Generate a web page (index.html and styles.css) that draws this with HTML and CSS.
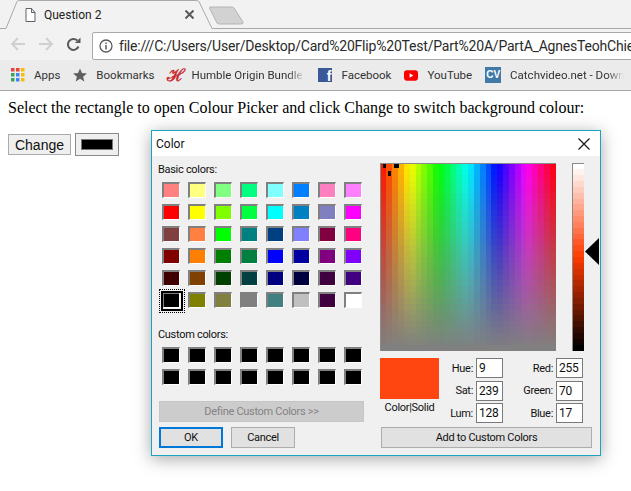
FILE: index.html

```html
<!DOCTYPE html>
<html lang="en">
<head>
    <meta charset="UTF-8">
    <title>Question 2</title>
    <link rel="stylesheet" href="styles.css">
</head>
<body>
    <header class="browser">
        <div class="tabstrip">
            <svg class="tabshape" width="631" height="29" viewBox="0 0 631 29">
                <path d="M0 28.5H6L17 1.5Q18 .5 20 .5H196Q198 .5 199 1.5L212 28.5H631" fill="#f2f2f2" stroke="#a9a9a9"/>
                <path d="M209.5 8Q209 7 211 7H231Q233 7 234 8L243 22Q243.500 24 241 24H220Q218 24 217 23Z" fill="#d2d2d2" stroke="#b4b4b4"/>
            </svg>
            <svg class="tabicon" width="11" height="14" viewBox="0 0 11 14">
                <path d="M1 .5H6.500L10 4.500V13.500H1ZM6.500 .5V4.500H10" fill="#fff" stroke="#5f6368"/>
            </svg>
            <span class="tabtitle">Question 2</span>
            <svg class="tabclose" width="9" height="9" viewBox="0 0 9 9">
                <path d="M.5 .5L8.500 8.500M8.500 .5L.5 8.500" stroke="#5a5a5a" stroke-width="2"/>
            </svg>
        </div>
        <div class="toolbar">
            <svg class="navicon" width="16" height="14" viewBox="0 0 16 14">
                <path d="M15 7H2M8 1L2 7L8 13" fill="none" stroke="#d0d0d0" stroke-width="2"/>
            </svg>
            <svg class="navicon" width="16" height="14" viewBox="0 0 16 14">
                <path d="M1 7H14M8 1L14 7L8 13" fill="none" stroke="#d0d0d0" stroke-width="2"/>
            </svg>
            <svg class="navicon" width="15" height="15" viewBox="0 0 15 15">
                <path d="M12.500 9.500A5.500 5.500 0 1 1 11.300 3.500" fill="none" stroke="#5a5a5a" stroke-width="2"/>
                <path d="M9 6H14.500V.5Z" fill="#5a5a5a"/>
            </svg>
            <div class="omnibox">
                <svg class="infoicon" width="14" height="14" viewBox="0 0 14 14">
                    <circle cx="7" cy="7" r="6" fill="none" stroke="#5a5a5a" stroke-width="1.300"/>
                    <path d="M7 6V10.500M7 3.500V5" stroke="#5a5a5a" stroke-width="1.500"/>
                </svg>
                <span class="url">file:///C:/Users/User/Desktop/Card%20Flip%20Test/Part%20A/PartA_AgnesTeohChiehYi/index.html</span>
            </div>
        </div>
        <nav class="bookmarks">
            <a class="mark">
                <svg width="14" height="14" viewBox="0 0 14 14">
                    <path d="M0 0h3.500v3.500H0z" fill="#ea4335"/><path d="M5 0h3.500v3.500H5z" fill="#ea4335"/><path d="M10 0h3.500v3.500H10z" fill="#fbbc05"/>
                    <path d="M0 5h3.500v3.500H0z" fill="#34a853"/><path d="M5 5h3.500v3.500H5z" fill="#4285f4"/><path d="M10 5h3.500v3.500H10z" fill="#fbbc05"/>
                    <path d="M0 10h3.500v3.500H0z" fill="#34a853"/><path d="M5 10h3.500v3.500H5z" fill="#4285f4"/><path d="M10 10h3.500v3.500H10z" fill="#fbbc05"/>
                </svg>
                <span>Apps</span>
            </a>
            <a class="mark">
                <svg width="14" height="14" viewBox="0 0 16 15">
                    <path d="M8 0L10.200 5.300L16 5.700L11.500 9.400L13 15L8 11.900L3 15L4.500 9.400L0 5.700L5.800 5.300Z" fill="#5f5f5f"/>
                </svg>
                <span>Bookmarks</span>
            </a>
            <a class="mark">
                <span class="humble">ℋ</span>
                <span class="fade humble-name">Humble Origin Bundle</span>
            </a>
            <a class="mark">
                <span class="fbicon">f</span>
                <span>Facebook</span>
            </a>
            <a class="mark">
                <svg width="14" height="11" viewBox="0 0 15 11">
                    <rect width="15" height="11" rx="3" fill="#f00"/>
                    <path d="M6 3L10 5.500L6 8Z" fill="#fff"/>
                </svg>
                <span>YouTube</span>
            </a>
            <a class="mark">
                <span class="cvicon">CV</span>
                <span class="fade catch-name">Catchvideo.net - Download</span>
            </a>
        </nav>
    </header>

    <main class="page">
        <p class="intro">Select the rectangle to open Colour Picker and click Change to switch background colour:</p>
        <div class="controls">
            <button class="change">Change</button>
            <span class="colorinput"><span class="colorfill"></span></span>
        </div>
    </main>

    <section class="dialog">
        <div class="titlebar">
            <span>Color</span>
            <svg width="12" height="12" viewBox="0 0 12 12">
                <path d="M.5 .5L11.500 11.500M11.500 .5L.5 11.500" stroke="#111" stroke-width="1.100"/>
            </svg>
        </div>
        <div class="dialogbody">
            <div class="leftcol">
                <div class="grouplabel">Basic colors:</div>
                <div class="swatches" id="basic"></div>
                <div class="grouplabel customlabel">Custom colors:</div>
                <div class="swatches" id="custom"></div>
                <button class="winbtn define" disabled>Define Custom Colors &gt;&gt;</button>
                <div class="okrow">
                    <button class="winbtn ok">OK</button>
                    <button class="winbtn cancel">Cancel</button>
                </div>
            </div>
            <div class="rightcol">
                <div class="pickers">
                    <canvas class="spectrum" id="spectrum" width="175" height="187"></canvas>
                    <canvas class="lumbar" id="lumbar" width="11" height="187"></canvas>
                    <svg class="arrow" width="14" height="27" viewBox="0 0 14 27">
                        <path d="M14 0V27L0 13.500Z" fill="#000"/>
                    </svg>
                </div>
                <div class="values">
                    <div class="preview">
                        <div class="previewfill"></div>
                        <div class="previewlabel">Color|Solid</div>
                    </div>
                    <div class="fields">
                        <label class="fieldlabel">Hue:</label><span class="field">9</span>
                        <label class="fieldlabel">Red:</label><span class="field">255</span>
                        <label class="fieldlabel">Sat:</label><span class="field">239</span>
                        <label class="fieldlabel">Green:</label><span class="field">70</span>
                        <label class="fieldlabel">Lum:</label><span class="field">128</span>
                        <label class="fieldlabel">Blue:</label><span class="field">17</span>
                    </div>
                </div>
                <button class="winbtn addcustom">Add to Custom Colors</button>
            </div>
        </div>
    </section>

    <script src="script.js"></script>
</body>
</html>
```

FILE: styles.css

```css
html, body {
    height: 100%;
}

body {
    margin: 0;
    background-color: #FFFFFF;
    overflow: hidden;
}

/* browser window */
.browser {
    background-color: #F2F2F2;
    font-family: Roboto, sans-serif;
    font-size: 11.500px;
    color: #333333;
    border-bottom: 1px solid #A6A6A6;
}

.tabstrip {
    display: flex;
    align-items: center;
    height: 29px;
    padding-left: 25px;
    position: relative;
}

.tabshape {
    position: absolute;
    left: 0;
    top: 0;
}

.tabicon, .tabtitle, .tabclose {
    position: relative;
}

.tabtitle {
    margin-left: 8px;
    width: 141px;
    font-size: 12px;
    color: #222222;
}

.toolbar {
    display: flex;
    align-items: center;
    gap: 12px;
    height: 32px;
    padding-left: 10px;
    margin-top: -1px;
}

.omnibox {
    flex: 1;
    display: flex;
    align-items: center;
    gap: 6px;
    height: 26px;
    margin-top: 3px;
    margin-left: -1px;
    margin-right: -4px;
    padding-left: 6px;
    background-color: #FFFFFF;
    border: 1px solid #A9A9A9;
    border-radius: 2px 0 0 2px;
    overflow: hidden;
}

.infoicon {
    flex: none;
}

.url {
    font-size: 14px;
    letter-spacing: -0.2px;
    color: #2A2A2A;
    white-space: nowrap;
}

.bookmarks {
    display: flex;
    align-items: center;
    gap: 13px;
    height: 30px;
    padding-left: 11px;
    background-color: #EBEBEB;
    white-space: nowrap;
    overflow: hidden;
}

.mark {
    display: flex;
    flex: none;
    align-items: center;
    gap: 9px;
}

.fade {
    overflow: hidden;
    -webkit-mask-image: linear-gradient(to right, #000 85%, transparent);
    mask-image: linear-gradient(to right, #000 85%, transparent);
}

.humble-name {
    width: 114px;
}

.catch-name {
    width: 114px;
}

.humble {
    width: 15px;
    font-family: "DejaVu Serif", serif;
    font-size: 17px;
    line-height: 16px;
    color: #C9252C;
    -webkit-text-stroke: 0.5px #C9252C;
}

.fbicon {
    width: 14px;
    height: 14px;
    background-color: #3B5998;
    color: #FFFFFF;
    font-family: "Liberation Sans", sans-serif;
    font-weight: bold;
    font-size: 14px;
    line-height: 16px;
    text-align: right;
    padding-right: 1px;
    box-sizing: border-box;
    overflow: hidden;
}

.cvicon {
    width: 16px;
    height: 16px;
    background-color: #4179A9;
    color: #FFFFFF;
    font-family: "Liberation Sans", sans-serif;
    font-weight: bold;
    font-size: 10px;
    line-height: 16px;
    text-align: center;
}

/* page content */
.page {
    padding: 8px;
    font-family: "Liberation Serif", serif;
    font-size: 16px;
    color: #000000;
}

.intro {
    margin: 0;
    white-space: nowrap;
}

.controls {
    display: flex;
    align-items: center;
    gap: 4px;
    margin-top: 16px;
}

.change {
    width: 63px;
    height: 21px;
    padding: 0;
    background-color: #EFEFEF;
    border: 1px solid #ABABAB;
    font-family: "Liberation Sans", sans-serif;
    font-size: 14px;
    color: #111111;
}

.colorinput {
    display: flex;
    width: 44px;
    height: 23px;
    padding: 5px;
    box-sizing: border-box;
    background-color: #EFEFEF;
    border: 1px solid #8A8A8A;
}

.colorfill {
    flex: 1;
    background-color: #000000;
    border: 1px solid #777777;
}

/* colour dialog */
.dialog {
    position: absolute;
    left: 151px;
    top: 130px;
    width: 450px;
    height: 326px;
    box-sizing: border-box;
    display: flex;
    flex-direction: column;
    background-color: #F0F0F0;
    border: 1px solid #1CA3C4;
    box-shadow: 0 3px 16px rgba(0, 0, 0, 0.35);
    font-family: Roboto, sans-serif;
    font-size: 11px;
    letter-spacing: -0.3px;
    color: #111111;
}

.titlebar {
    display: flex;
    align-items: center;
    justify-content: space-between;
    height: 25px;
    padding: 0 10px 0 4px;
    background-color: #FFFFFF;
    font-size: 12px;
    letter-spacing: 0;
}

.dialogbody {
    flex: 1;
    display: flex;
}

.leftcol {
    width: 228px;
    padding-left: 6px;
    box-sizing: border-box;
}

.grouplabel {
    height: 16px;
    line-height: 16px;
    margin-top: 6px;
}

.swatches {
    display: grid;
    grid-template-columns: repeat(8, 18px);
    column-gap: 8px;
    row-gap: 6px;
    margin-left: 4px;
    margin-top: 4px;
}

.customlabel {
    margin-top: 19px;
}

.swatch {
    position: relative;
    height: 16px;
    box-sizing: border-box;
    border-style: solid;
    border-width: 2px 1px 1px 2px;
    border-color: #808080 #FFFFFF #FFFFFF #808080;
}

.swatch.selected::after {
    content: "";
    position: absolute;
    left: -3px;
    top: -3px;
    right: -4px;
    bottom: -4px;
    border: 2px solid #000000;
    outline: 1px dotted #000000;
    outline-offset: 1px;
}

.winbtn {
    display: block;
    height: 21px;
    padding: 0;
    box-sizing: border-box;
    background-color: #E1E1E1;
    border: 1px solid #ADADAD;
    font-family: Roboto, sans-serif;
    font-size: 11px;
    letter-spacing: -0.3px;
    color: #111111;
}

.define {
    width: 205px;
    margin-top: 16px;
    margin-left: 1px;
    background-color: #CCCCCC;
    border-color: #C6C6C6;
    color: #838383;
}

.okrow {
    display: flex;
    gap: 8px;
    margin-top: 5px;
    margin-left: 1px;
}

.ok, .cancel {
    width: 64px;
}

.ok {
    border: 2px solid #0078D7;
}

.rightcol {
    flex: 1;
    padding-top: 7px;
}

.pickers {
    position: relative;
    display: flex;
    align-items: flex-start;
    gap: 16px;
}

.spectrum, .lumbar {
    display: block;
    border-style: solid;
    border-width: 1px 0 0 1px;
    border-color: #8A8A8A;
}

.arrow {
    position: absolute;
    left: 205px;
    top: 75px;
}

.values {
    display: flex;
    margin-top: 7px;
}

.preview {
    width: 59px;
    text-align: center;
}

.previewfill {
    height: 41px;
    background-color: #FF4611;
}

.previewlabel {
    margin-top: 1px;
    line-height: 16px;
    white-space: nowrap;
}

.fields {
    display: grid;
    grid-template-columns: 34px 27px 47px 27px;
    grid-auto-rows: 20px;
    column-gap: 3px;
    row-gap: 2.500px;
    align-items: center;
}

.fieldlabel {
    text-align: right;
}

.field {
    height: 20px;
    line-height: 18px;
    padding-left: 2px;
    box-sizing: border-box;
    background-color: #FFFFFF;
    border: 1px solid #7A7A7A;
    font-size: 12px;
}

.addcustom {
    width: 211px;
    margin-top: 4px;
    margin-left: 1px;
}
```

FILE: script.js

```js
var basic = [
    "#FF8080", "#FFFF80", "#80FF80", "#00FF80", "#80FFFF", "#0080FF", "#FF80C0", "#FF80FF",
    "#FF0000", "#FFFF00", "#80FF00", "#00FF40", "#00FFFF", "#0080C0", "#8080C0", "#FF00FF",
    "#804040", "#FF8040", "#00FF00", "#008080", "#004080", "#8080FF", "#800040", "#FF0080",
    "#800000", "#FF8000", "#008000", "#008040", "#0000FF", "#0000A0", "#800080", "#8000FF",
    "#400000", "#804000", "#004000", "#004040", "#000080", "#000040", "#400040", "#400080",
    "#000000", "#808000", "#808040", "#808080", "#408080", "#C0C0C0", "#400040", "#FFFFFF"
];

function addSwatch(parent, color, selected) {
    var s = document.createElement("div");
    s.className = selected ? "swatch selected" : "swatch";
    s.style.backgroundColor = color;
    parent.appendChild(s);
}

var basicBox = document.getElementById("basic");
basic.forEach(function (c, i) {
    addSwatch(basicBox, c, i === 40);
});

var customBox = document.getElementById("custom");
for (var n = 0; n < 16; n++) {
    addSwatch(customBox, "#000000", false);
}

// hue 0-239, sat 0-240, lum 0-240, as the windows dialog counts them
function hsl(h, s, l) {
    return "hsl(" + (h * 360 / 240) + "," + (s * 100 / 240) + "%," + (l * 100 / 240) + "%)";
}

var spec = document.getElementById("spectrum").getContext("2d");
var cols = 30, rows = 32;
for (var y = 0; y < rows; y++) {
    for (var x = 0; x < cols; x++) {
        spec.fillStyle = hsl((x + 0.5) * 240 / cols, 240 * (1 - y / (rows - 1)), 120);
        spec.fillRect(Math.floor(x * 175 / cols), Math.floor(y * 187 / rows), 7, 7);
    }
}

// selection cross
spec.fillStyle = "#000";
spec.fillRect(2, 0, 3, 4);
spec.fillRect(13, 0, 5, 4);
spec.fillRect(7, 7, 3, 5);

var lum = document.getElementById("lumbar").getContext("2d");
var steps = 32;
for (var i = 0; i < steps; i++) {
    lum.fillStyle = hsl(9, 239, 240 * (1 - i / (steps - 1)));
    lum.fillRect(0, Math.floor(i * 187 / steps), 11, 7);
}
```
